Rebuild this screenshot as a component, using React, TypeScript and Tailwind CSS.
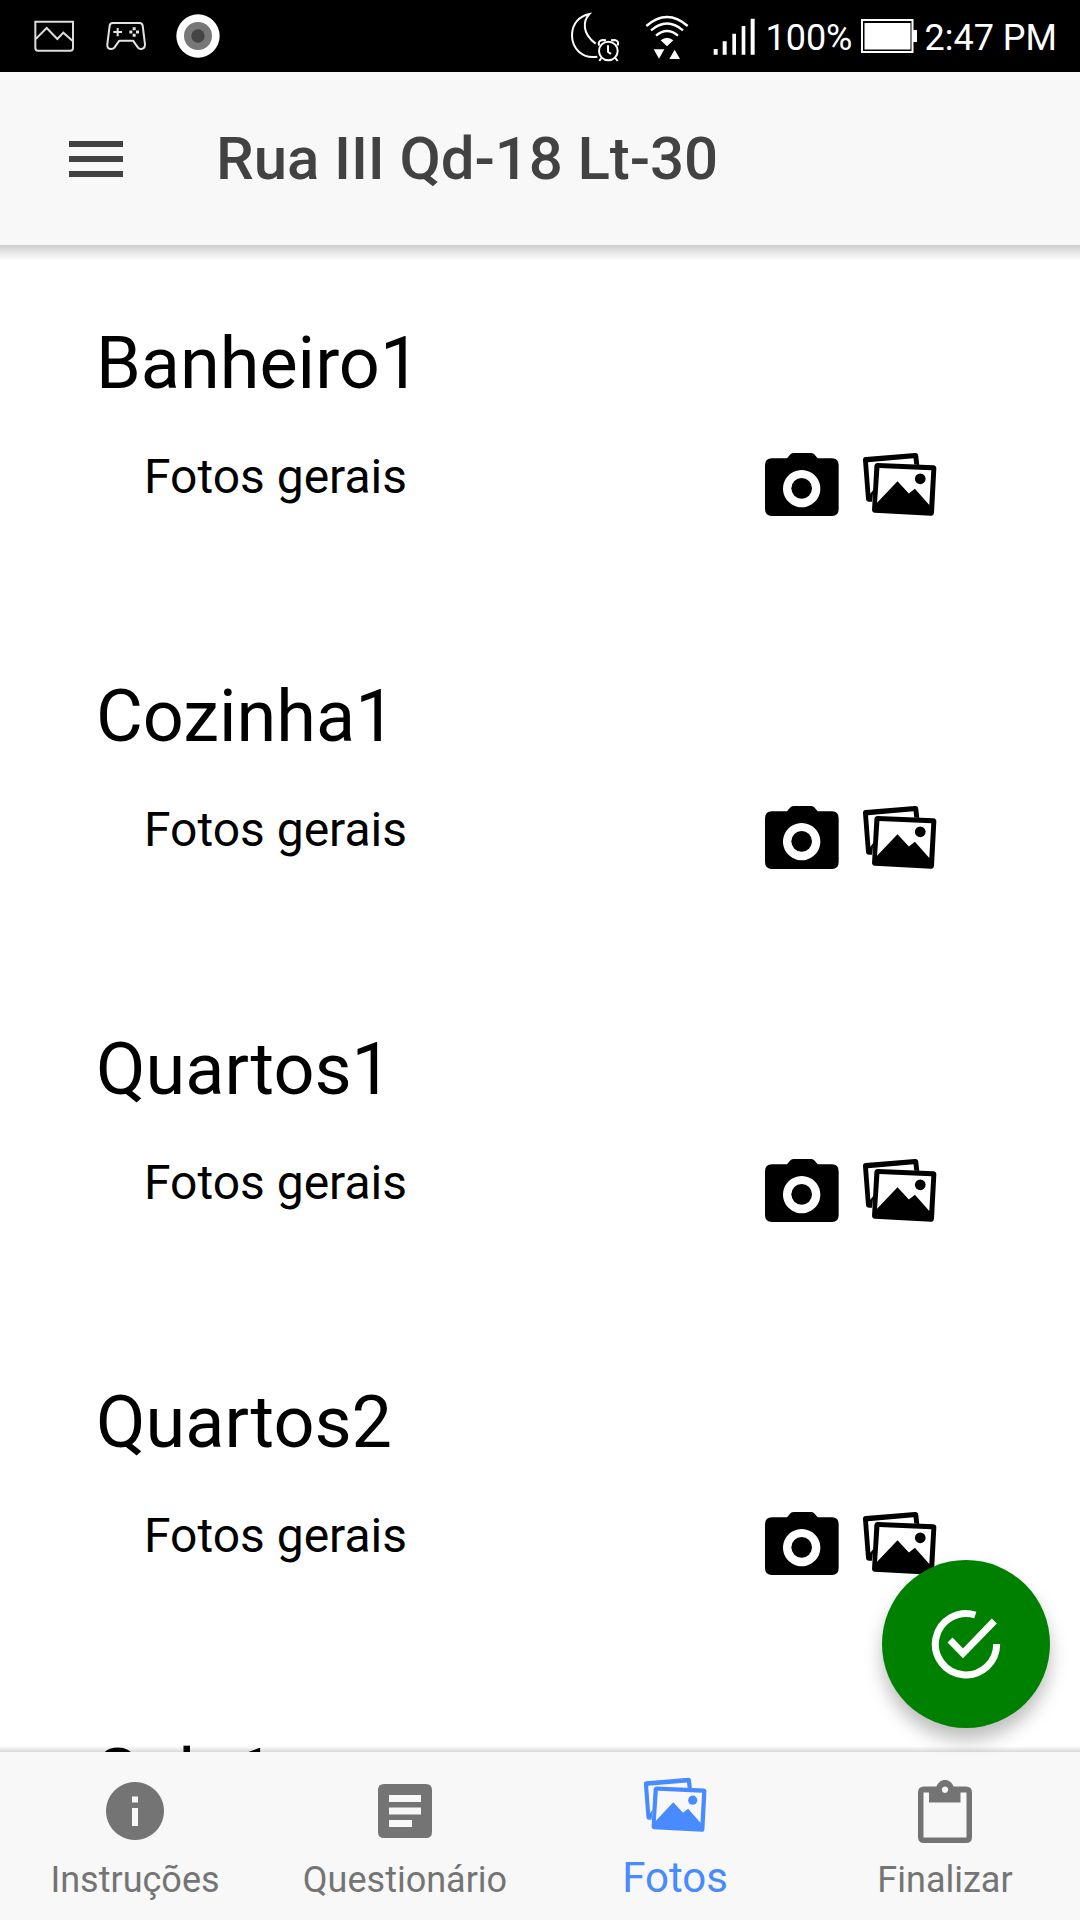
import clsx from "clsx";

const ROOMS = [
  { name: "Banheiro1", groups: ["Fotos gerais"] },
  { name: "Cozinha1", groups: ["Fotos gerais"] },
  { name: "Quartos1", groups: ["Fotos gerais"] },
  { name: "Quartos2", groups: ["Fotos gerais"] },
  { name: "Sala1", groups: [] },
];

function CameraIcon({ className }: { className?: string }) {
  return (
    <svg viewBox="75 69 222 189" className={className} fill="currentColor">
      <path
        fillRule="evenodd"
        d="M141 85L150 74Q154 69 160 69H214Q220 69 224 74L233 85H276Q296 85 296 106V237Q296 258 276 258H96Q75 258 75 237V106Q75 85 96 85ZM185 120a56 56 0 1 0 .01 0Z"
      />
      <circle cx="185" cy="175" r="31" />
    </svg>
  );
}

function PhotosIcon({ className }: { className?: string }) {
  return (
    <svg viewBox="366 66 224 196" preserveAspectRatio="none" className={className} fill="currentColor">
      <path
        fillRule="evenodd"
        d="M377 81L524 69Q533 68 534 77L537 105L522 104L520 85L384 97L391 192L400 180L396 216H387Q379 216 378 208L369 91Q368 82 377 81Z"
      />
      <path
        fillRule="evenodd"
        d="M413 99L579 106Q588 107 588 115L581 250Q580 259 572 258L404 249Q396 248 396 240L403 108Q404 99 413 99ZM418 114L411 219L472 154L506 191L524 177L567 226L573 121Z"
      />
      <circle cx="540" cy="147" r="16" />
    </svg>
  );
}

function InfoIcon() {
  return (
    <svg viewBox="0 0 58 58" className="size-[58px]" fill="currentColor">
      <path fillRule="evenodd" d="M29 0a29 29 0 1 0 .01 0ZM26 14.500h6v6h-6ZM26 26h6v18h-6Z" />
    </svg>
  );
}

function FormIcon() {
  return (
    <svg viewBox="0 0 54 54" className="size-[54px]" fill="currentColor">
      <path
        fillRule="evenodd"
        d="M6 0H48Q54 0 54 6V48Q54 54 48 54H6Q0 54 0 48V6Q0 0 6 0ZM11 11V18H43V11ZM11 23.500V30.500H43V23.500ZM11 36V43H34V36Z"
      />
    </svg>
  );
}

function ClipboardIcon() {
  return (
    <svg viewBox="0 0 54 63" className="h-[63px] w-[54px]" fill="currentColor">
      <path
        fillRule="evenodd"
        d="M6 6.500H18.500C20 2.500 23 0 27 0S34 2.500 35.500 6.500H48Q54 6.500 54 12.500V57Q54 63 48 63H6Q0 63 0 57V12.500Q0 6.500 6 6.500ZM5.500 12.500V57.500H48.500V12.500H42.500V22.500H11V12.500ZM27 6.500a3.200 3.200 0 1 0 .01 0Z"
      />
    </svg>
  );
}

function StatusBar() {
  return (
    <div className="flex h-[72px] shrink-0 items-center justify-between bg-black pr-[23px] pl-[33px] text-white">
      <div className="flex items-center">
        <svg viewBox="99 54 126 108" className="h-9 w-[42px]" fill="none" stroke="#ddd" strokeWidth="6">
          <path d="M106 65H219V144Q219 152 211 152H114Q106 152 106 144ZM106 118L140 84L172 117L190 98L219 124" />
        </svg>
        <svg viewBox="315 54 126 108" className="ml-[30px] h-9 w-[42px]" fill="none" stroke="#e4e4e4" strokeWidth="6">
          <path
            strokeLinejoin="round"
            d="M338 69H419Q427 69 428 77L435 133Q435 147 423 147Q417 147 414 143L399 122H358L343 143Q340 147 333 147Q321 147 322 133L329 77Q330 69 338 69Z"
          />
          <path strokeWidth="6" d="M353 84V109M340 96H366" />
          <path strokeWidth="9" d="M398 86H407M398 106H407M388 96H397M408 96H417" />
        </svg>
        <svg viewBox="525 39 138 138" className="ml-7 h-[46px] w-[46px]">
          <circle cx="594" cy="108" r="65" fill="#fff" />
          <circle cx="594" cy="108" r="42" fill="#777" />
          <circle cx="594" cy="108" r="20" fill="#444" />
        </svg>
      </div>
      <div className="flex items-center">
        <svg viewBox="90 36 150 150" className="mt-0.5 size-[50px]" fill="none" stroke="#fff" strokeWidth="6">
          <path d="M172 170C128 178 96 146 96 106C96 70 119 48 148 42C130 62 124 99 167 131" />
          <circle cx="205" cy="153" r="28" />
          <path d="M204 136V155L213 162M184 174L178 183M226 174L233 183M178 137Q172 123 187 120L198 121M232 137Q239 123 224 120L213 121" />
        </svg>
        <svg viewBox="315 42 132 138" className="mt-0.5 ml-[25px] h-[46px] w-11" fill="none" stroke="#fff" strokeWidth="7">
          <path d="M319 78Q381 24 443 78M333 91Q381 50 429 91M348 107Q381 79 414 107" />
          <path fill="#fff" stroke="none" d="M362 121Q381 105 400 121L381 139ZM341 148H373L357 176ZM388 177L404 149L420 177Z" />
        </svg>
        <svg viewBox="520 52 126 111" className="ml-6 h-[37px] w-[42px]" fill="#fff">
          <path d="M522 145h12v17h-12ZM549 122h12v40h-12ZM578 99h11v63h-11ZM606 76h11v86h-11ZM633 54h12v108h-12Z" />
        </svg>
        <span className="mt-1 ml-2.5 text-[36px] leading-[68px]">100%</span>
        <svg viewBox="0 0 56 34" className="ml-2 h-[34px] w-14">
          <path fill="none" stroke="#fff" strokeWidth="2" d="M1 1H51.500V33H1Z" />
          <path fill="#fff" d="M3.500 4H49.500V30.500H3.500ZM52 11h4v12h-4Z" />
        </svg>
        <span className="mt-1 ml-2 text-[36px] leading-[68px]">2:47 PM</span>
      </div>
    </div>
  );
}

function Header() {
  return (
    <header className="relative z-10 flex h-[173px] shrink-0 items-center bg-[#f8f8f8] pl-[69px] text-[#424242]">
      <button className="flex w-[54px] flex-col gap-[9px]">
        <span className="h-1.5 w-full bg-current" />
        <span className="h-1.5 w-full bg-current" />
        <span className="h-1.5 w-full bg-current" />
      </button>
      <h1 className="ml-[93px] text-[60px] leading-[72px] font-medium tracking-[-0.1px]">Rua III Qd-18 Lt-30</h1>
      <div className="absolute top-full left-0 h-4 w-full bg-linear-to-b from-black/20 via-black/10 via-45% to-transparent" />
    </header>
  );
}

function Room({ name, groups }: { name: string; groups: string[] }) {
  return (
    <section className="h-[353px] pt-[77px] pr-[143px] pl-24">
      <h2 className="text-[72px] leading-[84px]">{name}</h2>
      {groups.map((group) => (
        <div key={group} className="mt-[41px] flex items-start pl-12">
          <p className="grow text-[48px] leading-[60px]">{group}</p>
          <button className="mt-1.5">
            <CameraIcon className="h-[63px] w-[74px]" />
          </button>
          <button className="mt-[5px] ml-[23px]">
            <PhotosIcon className="h-[65px] w-[75px]" />
          </button>
        </div>
      ))}
    </section>
  );
}

const TABS = [
  { label: "Instruções", icon: <InfoIcon /> },
  { label: "Questionário", icon: <FormIcon /> },
  { label: "Fotos", icon: <PhotosIcon className="h-14 w-16" />, active: true },
  { label: "Finalizar", icon: <ClipboardIcon /> },
];

function TabBar() {
  return (
    <nav className="relative z-10 grid h-[168px] shrink-0 grid-cols-4 bg-[#f8f8f8]">
      <div className="absolute bottom-full left-0 h-1.5 w-full bg-linear-to-t from-black/15 to-transparent" />
      {TABS.map(({ label, icon, active }) => (
        <button
          key={label}
          className={clsx(
            "flex flex-col items-center justify-start",
            active ? "pt-[17px] text-[#488aff]" : "pt-[23px] text-[#747474]"
          )}>
          <span className="flex h-[72px] items-center">{icon}</span>
          <span className={clsx("leading-[48px]", active ? "mt-[13px] text-[42px]" : "mt-[9px] text-[36px]")}>
            {label}
          </span>
        </button>
      ))}
    </nav>
  );
}

export default function App() {
  return (
    <div className="relative flex h-[1920px] w-[1080px] flex-col overflow-hidden bg-white font-[Roboto,sans-serif] text-black">
      <StatusBar />
      <Header />
      <main className="min-h-0 grow overflow-hidden">
        {ROOMS.map((room) => (
          <Room key={room.name} {...room} />
        ))}
      </main>
      <TabBar />
      <button className="absolute right-[30px] bottom-48 z-20 flex size-[168px] items-center justify-center rounded-full bg-[#008000] text-white shadow-[0_12px_18px_rgba(0,0,0,0.26)]">
        <svg viewBox="570 352 216 216" className="size-[72px]" fill="none" stroke="currentColor" strokeWidth="21">
          <path d="M770 460A92 92 0 1 1 706 373M630 448L669 488L763 391" />
        </svg>
      </button>
    </div>
  );
}
